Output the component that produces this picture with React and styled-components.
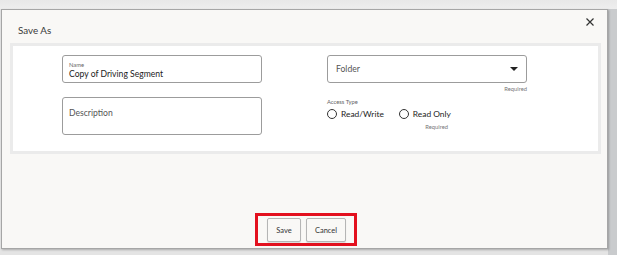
import React from "react";
import styled, { createGlobalStyle } from "styled-components";

const Global = createGlobalStyle`
  html, body { margin: 0; padding: 0; }
  body { font-family: "Lato", "Open Sans", sans-serif; background: #ececec; }
`;

const Backdrop = styled.div`
  width: 617px;
  height: 255px;
  box-sizing: border-box;
  padding: 9px 9px 6px 1px;
  background:
    linear-gradient(to bottom, #e8e8e8 0, #eeeeee 9px, transparent 9px),
    linear-gradient(to right, #e4e4e4 0, #e4e4e4 608px, #c9cbcd 608px);
  display: flex;
  overflow: hidden;
`;

const Dialog = styled.div`
  flex: 1;
  background: #f9f8f6;
  border: 1px solid #a6a6a6;
  box-shadow: 1px 1px 2px rgba(0,0,0,0.25);
  display: flex;
  flex-direction: column;
`;

const Header = styled.div`
  height: 33px;
  display: flex;
  align-items: center;
  justify-content: space-between;
  padding: 0 11px 0 16px;
`;

const Title = styled.div`
  font-size: 9.8px;
  color: #3a3a3a;
  margin-top: 7px;
`;

const Close = styled.button`
  border: 0;
  background: transparent;
  padding: 0;
  margin-top: -10px;
  width: 12px;
  height: 12px;
  display: flex;
  align-items: center;
  justify-content: center;
  cursor: pointer;
`;

const Panel = styled.div`
  margin: 0 6px 0 8px;
  border: 3px solid #ebebeb;
  background: #ffffff;
  height: 96px;
  display: grid;
  grid-template-columns: 200px 200px;
  column-gap: 65px;
  padding: 9px 0 0 49px;
  box-sizing: content-box;
`;

const Column = styled.div`
  display: flex;
  flex-direction: column;
`;

const Field = styled.div`
  box-sizing: border-box;
  width: 200px;
  height: ${(p) => p.h}px;
  border: 1px solid #9c9c9c;
  border-radius: 3px;
  background: #fff;
  padding: ${(p) => p.pad};
  display: flex;
  flex-direction: column;
  margin-bottom: ${(p) => p.mb || 0}px;
`;

const TinyLabel = styled.div`
  font-size: 5.8px;
  color: #666;
  line-height: 7px;
  margin-top: ${(p) => p.mt || 0}px;
`;

const Value = styled.div`
  font-size: 8.6px;
  color: #222;
  line-height: 12px;
`;

const Placeholder = styled.div`
  font-size: 8.6px;
  color: #555;
  line-height: 12px;
`;

const SelectBox = styled(Field)`
  flex-direction: row;
  align-items: center;
  justify-content: space-between;
`;

const Caret = styled.span`
  width: 0;
  height: 0;
  border-left: 4px solid transparent;
  border-right: 4px solid transparent;
  border-top: 4px solid #222;
  margin-right: 8px;
`;

const Required = styled.div`
  font-size: 5.8px;
  color: #777;
  text-align: right;
  line-height: 7px;
  margin-top: ${(p) => p.mt || 0}px;
  width: ${(p) => p.w || 200}px;
`;

const RadioGroup = styled.div`
  display: flex;
  align-items: center;
  gap: 15px;
  margin-top: 4px;
`;

const RadioItem = styled.label`
  display: flex;
  align-items: center;
  gap: 4px;
  font-size: 8.4px;
  color: #222;
`;

const Circle = styled.span`
  box-sizing: border-box;
  width: 10px;
  height: 10px;
  border-radius: 50%;
  border: 1px solid #333;
  background: #fff;
`;

const Footer = styled.div`
  flex: 1;
  display: flex;
  align-items: flex-end;
  justify-content: center;
  padding-bottom: 2px;
  padding-left: 3px;
`;

const Highlight = styled.div`
  border: 3px solid #e3101e;
  padding: 2px 8px 1px 9px;
  display: flex;
  gap: 5px;
`;

const Button = styled.button`
  box-sizing: border-box;
  height: 24px;
  width: ${(p) => p.w}px;
  border: 1px solid #b5b5b5;
  border-radius: 2px;
  background: #f9f8f6;
  box-shadow: 0 1px 1px rgba(0,0,0,0.12);
  font-family: "Lato", sans-serif;
  font-size: 7.5px;
  color: #333;
  padding: 0;
`;

export default function App() {
  return (
    <>
      <Global />
      <Backdrop>
        <Dialog>
          <Header>
            <Title>Save As</Title>
            <Close aria-label="Close">
              <svg width="8" height="8" viewBox="0 0 8 8">
                <path d="M0.5 0.5L7.5 7.5M7.5 0.5L0.5 7.5" stroke="#333" strokeWidth="1.2" />
              </svg>
            </Close>
          </Header>
          <Panel>
            <Column>
              <Field h={28} pad="5px 6px 0" mb={14}>
                <TinyLabel>Name</TinyLabel>
                <Value>Copy of Driving Segment</Value>
              </Field>
              <Field h={38} pad="9px 6px 0">
                <Placeholder>Description</Placeholder>
              </Field>
            </Column>
            <Column>
              <SelectBox h={28} pad="0 0 0 8px">
                <Placeholder>Folder</Placeholder>
                <Caret />
              </SelectBox>
              <Required mt={2}>Required</Required>
              <TinyLabel mt={6}>Access Type</TinyLabel>
              <RadioGroup>
                <RadioItem><Circle />Read/Write</RadioItem>
                <RadioItem><Circle />Read Only</RadioItem>
              </RadioGroup>
              <Required mt={4} w={121}>Required</Required>
            </Column>
          </Panel>
          <Footer>
            <Highlight>
              <Button w={34}>Save</Button>
              <Button w={40}>Cancel</Button>
            </Highlight>
          </Footer>
        </Dialog>
      </Backdrop>
    </>
  );
}
